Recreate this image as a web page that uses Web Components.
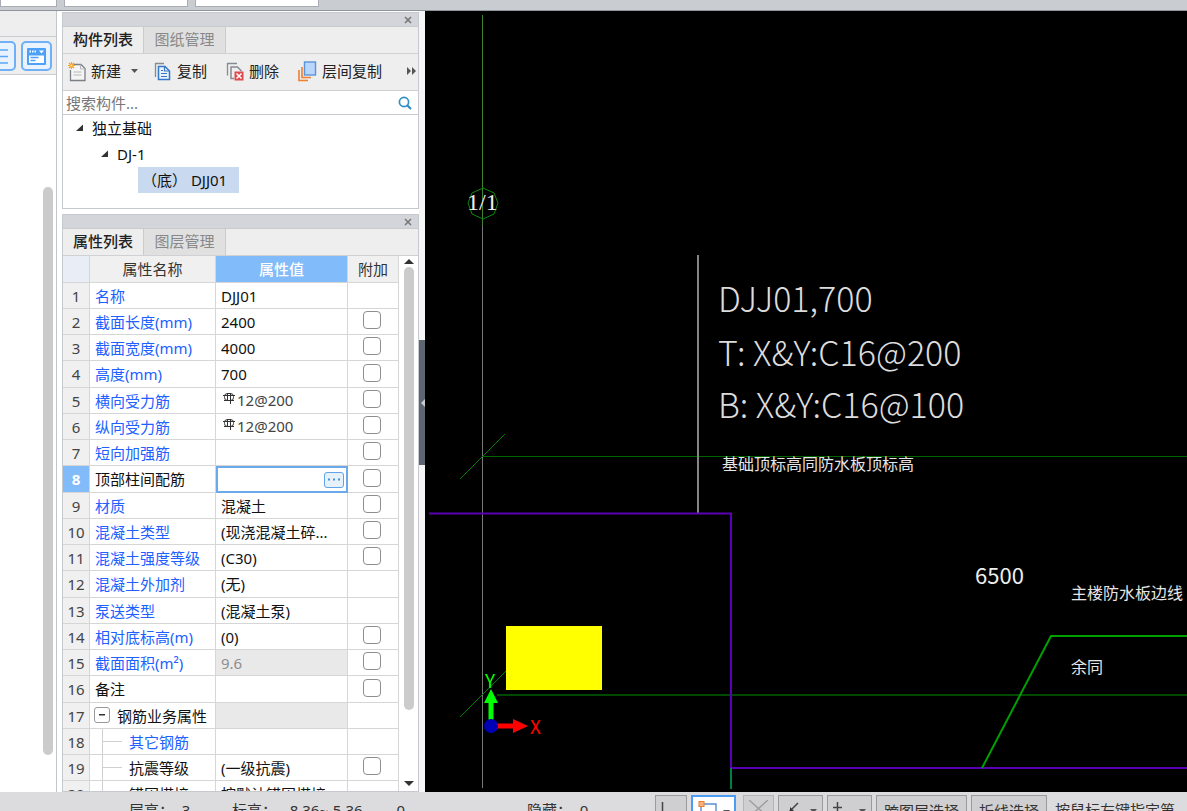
<!DOCTYPE html>
<html lang="zh-CN">
<head>
<meta charset="utf-8">
<title>构件列表</title>
<style>
html,body{height:100%;margin:0}
body{font:15px/20px "Noto Sans","Noto Sans CJK SC",sans-serif;color:#111;background:#fff;overflow:hidden}
</style>
</head>
<body>
<app-shell>
  <ribbon-strip slot="ribbon"></ribbon-strip>
  <side-nav slot="body"></side-nav>
  <dock-area slot="body">
    <dock-panel class="components" active="构件列表" other="图纸管理"><component-list></component-list></dock-panel>
    <dock-panel class="properties" active="属性列表" other="图层管理"><property-grid></property-grid></dock-panel>
  </dock-area>
  <split-bar slot="body"></split-bar>
  <cad-canvas slot="body"></cad-canvas>
  <status-bar slot="status"></status-bar>
</app-shell>
<script>
function define(name, html, setup){
  const t = document.createElement('template');
  t.innerHTML = html;
  customElements.define(name, class extends HTMLElement{
    constructor(){
      super();
      this.attachShadow({mode:'open'}).append(t.content.cloneNode(true));
    }
    connectedCallback(){ if(setup) setup(this, this.shadowRoot); }
  });
}

define('app-shell', `<style>
:host{display:grid;grid-template-rows:11px minmax(0,1fr) 19px;height:100vh}
main{display:flex;min-height:0;background:#fff}
</style><slot name="ribbon"></slot><main><slot name="body"></slot></main><slot name="status"></slot>`);

define('ribbon-strip', `<style>
:host{display:flex;align-items:flex-end;gap:7px;overflow:hidden;background:#c9ccd1;border-bottom:1px solid #8f959c;padding-bottom:3px;box-sizing:border-box}
select{appearance:none;box-sizing:border-box;height:26px;width:124px;margin:0;border:1px solid #a9adb3;border-radius:0;background:#fff;color:#777;font:inherit;padding:0 4px;flex:none}
.first{width:57px}
</style><select class="first" aria-label="楼层"></select><select aria-label="构件类型"></select><select aria-label="构件"></select>`);

define('side-nav', `<style>
:host{display:flex;flex-direction:column;width:57px;flex:none;box-sizing:border-box;border-right:1px solid #c3c6ca;margin-right:5px;background:#fff}
.cap{height:25px;background:#eee;border-bottom:1px solid #c9ccd0}
.tools{display:flex;justify-content:flex-end;gap:5px;height:38px;background:#eee;border-bottom:1px solid #c9ccd0;padding:4px 4px 0 0;box-sizing:border-box;overflow:hidden}
button{box-sizing:border-box;width:31px;height:30px;padding:0;border:2px solid #6fb0f7;border-radius:5px;background:#e9f3ff;display:grid;place-items:center;flex:none}
.track{flex:1;display:flex;justify-content:flex-end;padding:112px 3px 37px 0}
.track i{width:10px;border-radius:5px;background:#cbcbcb}
</style><div class="cap"></div>
<div class="tools">
<button aria-label="列表"><svg width="19" height="17"><path d="M0 2H17M0 8.500H17M0 15H17" stroke="#5ba7f7" stroke-width="1.500"/></svg></button>
<button aria-label="详情"><svg width="19" height="17"><rect width="19" height="17" rx="1" fill="#4da0f8"/><path d="M2.500 3.500H9" stroke="#fff" stroke-width="2" stroke-dasharray="1.500 1"/><path d="M12 2.500h5l-2.500 3z" fill="#fff"/><path d="M2 7.500h15v7.500H2z" fill="#fff"/><path d="M3.500 9.500h8M3.500 12.500h5" stroke="#4da0f8" stroke-width="1.500"/></svg></button>
</div>
<div class="track"><i></i></div>`);

define('dock-area', `<style>
:host{display:flex;flex-direction:column;gap:5px;width:357px;flex:none;padding-top:1px;box-sizing:border-box;min-height:0}
::slotted(.components){height:197px;flex:none}
::slotted(.properties){flex:1;min-height:0}
</style><slot></slot>`);

define('dock-panel', `<style>
:host{display:flex;flex-direction:column;box-sizing:border-box;border:1px solid #c6c9cd;overflow:hidden;background:#fff}
header{display:flex;justify-content:flex-end;align-items:center;height:13px;flex:none;background:#d3d5da;padding-right:6px}
.close{all:unset;display:grid;width:8px;height:8px}
nav{display:flex;height:28px;flex:none;box-sizing:border-box;background:#eee;border-top:1px solid #c9cbcf;border-bottom:1px solid #cfd1d4}
nav button{font:inherit;box-sizing:border-box;width:81px;padding:0 0 2px;border:0;border-right:1px solid #c9cbcf;background:#eee;color:#222}
nav button.on{font-weight:500}
nav button.off{width:82px;background:#e0e0e0;color:#888}
</style><header><button class="close" aria-label="关闭"><svg width="8" height="8"><path d="M1 1L7 7M7 1L1 7" stroke="#777" stroke-width="1.600"/></svg></button></header>
<nav><button class="on"></button><button class="off"></button></nav><slot></slot>`, (el, r) => {
  r.querySelector('.on').textContent = el.getAttribute('active');
  r.querySelector('.off').textContent = el.getAttribute('other');
});

define('component-list', `<style>
:host{display:flex;flex-direction:column;flex:1}
.bar{display:flex;align-items:center;height:37px;box-sizing:border-box;background:#eee;padding:0 1px 2px 5px;border-bottom:1px solid #cfd1d4}
.bar button{display:flex;align-items:center;gap:6px;padding:0;border:0;background:none;font:inherit;color:#222;white-space:nowrap;margin-right:19px}
.bar button.new{margin-right:16px}
.bar .new svg:last-child{margin-left:4px}
.bar button.more{margin:0 0 0 auto}
.bar button.layer{margin:0}
svg{overflow:visible}
.search{display:flex;align-items:center;height:24px;box-sizing:border-box;border-bottom:1px solid #c6c9cd;padding:0 6px 0 3px}
input{flex:1;min-width:0;border:0;outline:0;padding:0;font:inherit;background:none}
input::placeholder{color:#777;opacity:1}
ul{list-style:none;margin:0;padding:0}
li>span{display:flex;align-items:center;gap:8px;height:26px;width:max-content}
li ul{padding-left:25px}
.root{padding-left:13px}
.sel{background:#c9d9f0;padding:0 12px 0 4px;margin-left:12px}
</style>
<div class="bar">
<button class="new"><svg width="17" height="19"><path d="M5.500 2.500H13l4 4V18.500H2.500V8" fill="#f5f5f5" stroke="#7b8086" stroke-width="1.300"/><path d="M12.500 2.500v4.500H17M5.500 10h8M5.500 13h8" fill="none" stroke="#b4b7ba"/><path d="M3.500 0v7M0 3.500h7M1 1l5 5M6 1L1 6" stroke="#f4a024" stroke-width="1.200"/><circle cx="3.500" cy="3.500" r="1" fill="#ffe9ae"/></svg>新建<svg width="7" height="4"><path d="M0 0h7L3.500 4z" fill="#555"/></svg></button>
<button><svg width="17" height="18"><path d="M1.500 15V1.500H10" fill="none" stroke="#858b92" stroke-width="1.300"/><path d="M4.500 4.500H11L15.500 9v8.500h-11z" fill="#eaf3fd" stroke="#3578c6" stroke-width="1.500"/><path d="M10.500 4.500V9H15M7 8.500h2M7 11.500h6M7 14.500h6" fill="none" stroke="#3578c6" stroke-width="1.200"/></svg>复制</button>
<button><svg width="17" height="19"><path d="M1.500 13.500V1.500H11" fill="none" stroke="#858b92" stroke-width="1.300"/><path d="M8 16.500H5V5H11.500L15.500 9" fill="none" stroke="#858b92" stroke-width="1.500"/><rect x="8.500" y="9.500" width="9" height="9" fill="#dc4a50"/><path d="M10.500 11.500l5 5M15.500 11.500l-5 5" stroke="#fff" stroke-width="1.500"/></svg>删除</button>
<button class="layer"><svg width="18" height="19"><path d="M1 8V18.500H10" fill="none" stroke="#ee7f31" stroke-width="1.600"/><path d="M4 5V15.500H13" fill="none" stroke="#ee7f31" stroke-width="1.600"/><rect x="6.500" y="0" width="11" height="13" fill="#b9d6fb" stroke="#5a93d8" stroke-width="1.400"/></svg>层间复制</button>
<button class="more" aria-label="更多"><svg width="11" height="8"><path d="M1 0v8l4-4zM6 0v8l4-4z" fill="#555"/></svg></button>
</div>
<label class="search"><input type="text" aria-label="搜索构件" placeholder="搜索构件..."><svg width="14" height="14"><circle cx="6" cy="6" r="4.600" fill="none" stroke="#2f8ec4" stroke-width="1.700"/><path d="M9.200 9.200L13 13" stroke="#2f8ec4" stroke-width="2.200"/></svg></label>
<ul class="root"><li><span><svg width="8" height="8"><path d="M7 0.500V7H0z" fill="#333"/></svg>独立基础</span>
<ul><li><span><svg width="8" height="8"><path d="M7 0.500V7H0z" fill="#333"/></svg>DJ-1</span>
<ul><li><span class="sel">（底）&nbsp;DJJ01</span></li></ul></li></ul></li></ul>`);

const B = 'b', K = 'k';
const rows = [
  [B,'名称','DJJ01',0],[B,'截面长度(mm)','2400',1],[B,'截面宽度(mm)','4000',1],[B,'高度(mm)','700',1],
  [B,'横向受力筋','#12@200',1],[B,'纵向受力筋','#12@200',1],[B,'短向加强筋','',1],[K,'顶部柱间配筋','*',1],
  [B,'材质','混凝土',1],[B,'混凝土类型','(现浇混凝土碎...',1],[B,'混凝土强度等级','(C30)',1],[B,'混凝土外加剂','(无)',0],
  [B,'泵送类型','(混凝土泵)',0],[B,'相对底标高(m)','(0)',1],[B,'截面面积(m²)','9.6',1,'dis'],[K,'备注','',1],
  [K,'钢筋业务属性','',0,'dis group'],[B,'其它钢筋','',0,'child'],[K,'抗震等级','(一级抗震)',1,'child'],[K,'锚固搭接','按默认锚固搭接',0,'child']
];
define('property-grid', `<style>
:host{display:flex;flex:1;min-height:0;overflow:hidden}
.view{flex:1;min-width:0;overflow:hidden}
table{width:100%;border-collapse:separate;border-spacing:0;table-layout:fixed}
col.n{width:27px}col.v{width:132px}col.a{width:51px}col.name{width:126px}
tr{height:26px}
thead tr,tbody tr:nth-child(4n){height:27px}
th,td{box-sizing:border-box;padding:0;border:0 solid #d6d6d6;border-width:0 1px 1px 0;font-weight:400;text-align:left;vertical-align:middle;white-space:nowrap;overflow:hidden;line-height:20px}
thead th{background:#f0f0f0;text-align:center;color:#333}
thead th:first-child{background:#e9edf5}
thead th.cur{background:#82bbfa;color:#fff;font-weight:500}
tbody th{background:#f0f0f0;text-align:center;color:#444}
td{padding-left:5px;background:#fff}
td.b{color:#2060ff}
td.c{text-align:center;padding:0}
input[type=checkbox]{appearance:none;display:block;box-sizing:border-box;width:18px;height:18px;margin:0 auto 3px 15px;border:1px solid #8e8e8e;border-radius:4px;background:#fff}
tr.now th{background:#82bbfa;color:#fff;font-weight:700}
tr.now td.val{padding:0;border:2px solid #6aa9ea}
.edit{display:flex;align-items:center;padding-right:2px}
.edit input{flex:1;min-width:0;border:0;outline:0;padding:0 3px;font:inherit;height:20px}
.edit button{box-sizing:border-box;width:20px;height:16px;padding:0;border:1px solid #5ea4e6;border-radius:3px;background:#e6f1fc;display:grid;place-items:center}
tr.dis td.val{background:#e9e9e9;color:#8e8e8e}
.bar{display:flex;align-items:center;gap:2px;height:20px;color:#444;padding:0 0 2px 2px}
.bar svg{margin-bottom:4px}
.fold{display:flex;align-items:center;gap:7px}
.fold button{box-sizing:border-box;width:16px;height:16px;margin:0 0 2px -1px;padding:0;border:1px solid #999;border-radius:3px;background:#fff;display:grid;place-items:center}
.branch{display:flex;align-items:center;gap:7px;height:20px;margin-left:7px}
.branch:before{content:"";width:20px;height:1px;background:#d0d0d0}
tr.child td.b,tr.child td.k{background-image:linear-gradient(#d0d0d0,#d0d0d0);background-size:1px 100%;background-position:12px 0;background-repeat:no-repeat}
.scroll{display:flex;flex-direction:column;align-items:center;width:19px;padding:3px 0 5px;box-sizing:border-box;flex:none}
.scroll i{width:10px;flex:0 1 443px;border-radius:5px;background:#cbcbcb;margin:3px 0 auto}
svg{flex:none}
</style><div class="view"><table><colgroup><col class="n"><col class="name"><col class="v"><col class="a"></colgroup>
<thead><tr><th></th><th>属性名称</th><th class="cur">属性值</th><th>附加</th></tr></thead><tbody></tbody></table></div>
<div class="scroll"><svg width="10" height="5"><path d="M0 5h10L5 0z" fill="#333"/></svg><i></i><svg width="10" height="5"><path d="M0 0h10L5 5z" fill="#333"/></svg></div>`, (el, r) => {
  const rebar = '<svg width="12" height="12" fill="none" stroke="#333"><path d="M4.500 1v8M7.500 1v11M0 3.500h12M1 8.500h10"/><rect x="1.500" y="1.500" width="9" height="7" rx="3"/></svg>';
  r.querySelector('tbody').innerHTML = rows.map(([c,name,val,chk,cls=''],i) => {
    let v = val, n = name;
    if(val[0] === '#'){ v = '<div class="bar">' + rebar + val.slice(1) + '</div>'; }
    if(val === '*'){ cls = 'now'; v = '<div class="edit"><input type="text" aria-label="'+name+'"><button aria-label="更多"><svg width="14" height="3"><path d="M1 .5h2v2h-2zM6 .5h2v2h-2zM11 .5h2v2h-2z" fill="#4592dc"/></svg></button></div>'; }
    if(cls.includes('group')) n = '<div class="fold"><button aria-label="折叠"><svg width="6" height="2"><path d="M0 0h6v1.500H0z" fill="#333"/></svg></button>'+name+'</div>';
    if(cls === 'child') n = '<div class="branch">'+name+'</div>';
    return '<tr class="'+cls+'"><th scope="row">'+(i+1)+'</th><td class="'+c+'">'+n+'</td><td class="val">'+v+'</td><td class="c">'+(chk?'<input type="checkbox" aria-label="附加 '+name+'">':'')+'</td></tr>';
  }).join('');
});

define('split-bar', `<style>
:host{display:flex;flex-direction:column;width:6px;flex:none;padding-top:329px;box-sizing:border-box;background:#f6f6f6}
button{height:125px;width:6px;padding:0;border:0;background:#5c6570;display:grid;place-items:center}
</style><button aria-label="收起"><svg width="5" height="8"><path d="M5 0v8L1 4z" fill="#c8ccd2"/></svg></button>`);

define('cad-canvas', `<style>
:host{display:block;flex:1;min-width:0;background:#000;overflow:hidden}
svg{display:block;width:100%;height:100%}
.cad{font:200 34px/40px "Noto Sans CJK SC",sans-serif;fill:#dcdcdc}
.note{font:400 16px "Noto Sans CJK SC",sans-serif;fill:#e6e6e6}
.dim{font:22px "Noto Sans CJK SC","Noto Sans",sans-serif;fill:#eee}
.axis{font:19px "Noto Sans CJK SC",sans-serif}
</style><svg fill="none">
<g shape-rendering="crispEdges">
<path d="M57.500 4V777" stroke="#777"/>
<path d="M57.500 4V215" stroke="#3f8030"/>
<path d="M58 445.500H2000" stroke="#006400"/>
<path d="M72 684H2000" stroke="#004a00" stroke-width="2"/>
<path d="M273 244V503" stroke="#858585" stroke-width="2"/>
</g>
<path d="M35 468L80 423M35 706L85 656" stroke="#007c00"/>
<path d="M4 502.500H306V757H2000" stroke="#5a00b4" stroke-width="2"/>
<path d="M306 757V778" stroke="#008040" stroke-width="2"/>
<path d="M557 757L626 625H2000" stroke="#00a000" stroke-width="2"/>
<rect x="81" y="615" width="96" height="64" fill="#ff0"/>
<path d="M58 177l11 5 4 10-4 11-11 5-11-5-4-11 4-10z" stroke="#0a8a0a"/>
<text x="42" y="199" font-family="Liberation Serif" font-size="24" fill="#eee">1/1</text>
<path d="M66 709V690" stroke="#0f0" stroke-width="5"/><path d="M66 678l7 14H59z" fill="#0f0"/>
<path d="M72 715H90" stroke="red" stroke-width="5"/><path d="M103 715l-15-7v14z" fill="red"/>
<circle cx="66" cy="715" r="7" fill="#0000b4"/>
<text class="axis" x="60" y="677" fill="#0f0">Y</text><text class="axis" x="105" y="723" fill="red">X</text>
<text class="cad" x="293" y="301">DJJ01,700</text>
<text class="cad" x="293" y="355">T: X&amp;Y:C16@200</text>
<text class="cad" x="293" y="407">B: X&amp;Y:C16@100</text>
<text class="note" x="297" y="459">基础顶标高同防水板顶标高</text>
<text class="dim" x="550" y="573">6500</text>
<text class="note" x="646" y="588">主楼防水板边线</text>
<text class="note" x="646" y="662">余同</text>
</svg>`);

define('status-bar', `<style>
:host{display:flex;align-items:flex-start;overflow:hidden;background:#dcdcde;box-sizing:border-box;white-space:nowrap;color:#333;padding-left:129px}
.t{line-height:20px;padding-top:8px;flex:none;box-sizing:border-box;white-space:pre}
.h{width:103px}.lv{width:295px}.hid{width:128px}
.lv{display:flex;gap:34px}
button{font:inherit;line-height:20px;box-sizing:border-box;height:32px;margin:3px 4px 0 0;padding:5px 7px;border:1px solid #9b9b9e;background:#cfcfd1;color:#333;display:flex;align-items:flex-start;gap:6px;flex:none}
.i1{width:32px}.i2{width:45px;border:2px solid #4a9cf5;background:#fff}.i3{width:31px;margin-left:3px;border-color:#b4b4b6}.i4,.i5{width:45px}
.i1,.i2,.i3,.i4,.i5{padding:4px 5px}
button svg{flex:none}
.tip{padding-left:4px}
</style>
<span class="t h">层高：  3</span><span class="t lv"><span>标高：  -8.36~-5.36</span><span>0</span></span><span class="t hid">隐藏：  0</span>
<button class="i1" aria-label="正交"><svg width="18" height="18"><path d="M1.500 2V17H17" fill="none" stroke="#444" stroke-width="1.500"/></svg></button>
<button class="i2" aria-label="捕捉"><svg width="19" height="18"><path d="M3 3H18V17H3z" fill="none" stroke="#5a8fd0" stroke-width="1.400"/><rect x="1" y="0.500" width="5" height="5" fill="#f9b27c" stroke="#ee7f31"/></svg><svg width="7" height="14"><path d="M0 9h7l-3.500 4z" fill="#555"/></svg></button>
<button class="i3" aria-label="交点"><svg width="19" height="18"><path d="M0 0L19 17M19 0L0 17" stroke="#999" stroke-width="1.300"/></svg></button>
<button class="i4" aria-label="垂点"><svg width="20" height="18"><path d="M14 3L3 14" stroke="#444" stroke-width="1.500"/><path d="M6 7v5h5z" fill="#333"/></svg><svg width="7" height="14"><path d="M0 9h7l-3.500 4z" fill="#555"/></svg></button>
<button class="i5" aria-label="偏移"><svg width="20" height="18"><path d="M4.500 2V12M0 7.500H9" stroke="#444" stroke-width="1.500"/></svg><svg width="7" height="14"><path d="M0 9h7l-3.500 4z" fill="#555"/></svg></button>
<button>跨图层选择</button><button>折线选择</button><span class="t tip">按鼠标左键指定第</span>`);
</script>
</body>
</html>
